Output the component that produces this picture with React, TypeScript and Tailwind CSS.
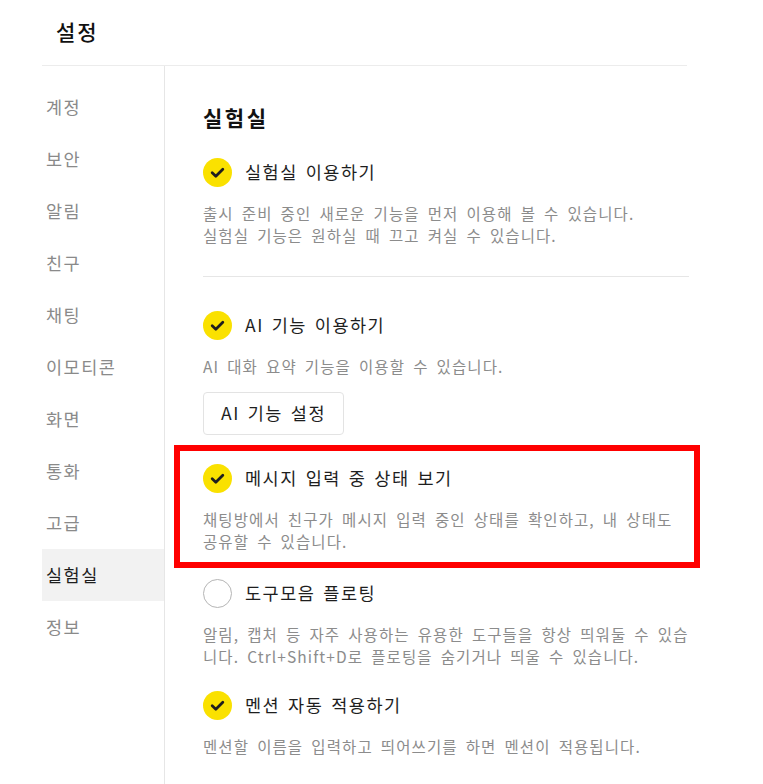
import type { ReactNode } from 'react'

const NAV = ['계정', '보안', '알림', '친구', '채팅', '이모티콘', '화면', '통화', '고급', '실험실', '정보']

function CheckMark({ checked }: { checked: boolean }) {
  if (!checked) {
    return <span className="block h-[29px] w-[29px] shrink-0 rounded-full border-[1.5px] border-[#b5b5b5] bg-white" />
  }
  return (
    <span className="flex h-[29px] w-[29px] shrink-0 items-center justify-center rounded-full bg-[#fae100]">
      <svg width="17" height="17" viewBox="0 0 16 16" fill="none">
        <path d="M3 8.3 6.4 11.5 13 4.9" stroke="#1e1e1e" strokeWidth="2.6" strokeLinecap="round" strokeLinejoin="round" />
      </svg>
    </span>
  )
}

function Option({
  label,
  checked = true,
  lines,
  className = '',
  children,
}: {
  label: string
  checked?: boolean
  lines: string[]
  className?: string
  children?: ReactNode
}) {
  return (
    <div className={className}>
      <div className="flex h-[30px] items-center gap-[13px]">
        <CheckMark checked={checked} />
        <span className="text-[17.5px] tracking-[1.5px] text-[#1e1e1e] [word-spacing:2.5px]">{label}</span>
      </div>
      <p className="mt-[15px] text-[15.5px] leading-[22px] tracking-[1.1px] whitespace-nowrap text-[#8c8c8c] [word-spacing:3.5px]">
        {lines.map((l, i) => (
          <span key={i} className="block">
            {l}
          </span>
        ))}
      </p>
      {children}
    </div>
  )
}

export default function App() {
  return (
    <div className="relative min-h-[784px] bg-white font-['Noto_Sans_CJK_KR','Noto_Sans',sans-serif]">
      <div className="ml-[42px] w-[645px]">
        <header className="flex h-[66px] items-center border-b border-[#ececec] pb-[2px] pl-[14px]">
          <h1 className="text-[21px] font-medium tracking-[2px] text-[#111]">설정</h1>
        </header>

        <div className="flex min-h-[718px]">
          <nav className="w-[123px] shrink-0 border-r border-[#e6e6e6] pt-[15px]">
            {NAV.map((item) => (
              <div
                key={item}
                className={
                  item === '실험실'
                    ? 'flex h-[52px] items-center bg-[#f2f2f2] pl-[4px] text-[17.5px] tracking-[1.5px] text-[#1e1e1e]'
                    : 'flex h-[52px] items-center pl-[4px] text-[17.5px] tracking-[1.5px] text-[#8a8a8a]'
                }
              >
                {item}
              </div>
            ))}
          </nav>

          <main className="flex-1 pl-[38px]">
            <h2 className="mt-[37px] text-[21px] leading-[28px] font-bold tracking-[2.5px] text-[#111]">실험실</h2>

            <Option
              className="mt-[26px]"
              label="실험실 이용하기"
              lines={['출시 준비 중인 새로운 기능을 먼저 이용해 볼 수 있습니다.', '실험실 기능은 원하실 때 끄고 켜실 수 있습니다.']}
            />

            <div className="mt-[30px] border-t border-[#e6e6e6]" />

            <Option className="mt-[33px]" label="AI 기능 이용하기" lines={['AI 대화 요약 기능을 이용할 수 있습니다.']}>
              <button className="mt-[15px] h-[43px] rounded-[4px] border border-[#e3e3e3] px-[17px] text-[17.5px] tracking-[1.5px] text-[#1e1e1e] [word-spacing:2.5px]">
                AI 기능 설정
              </button>
            </Option>

            <Option
              className="mt-[28px]"
              label="메시지 입력 중 상태 보기"
              lines={['채팅방에서 친구가 메시지 입력 중인 상태를 확인하고, 내 상태도', '공유할 수 있습니다.']}
            />

            <Option
              className="mt-[26px]"
              label="도구모음 플로팅"
              checked={false}
              lines={['알림, 캡처 등 자주 사용하는 유용한 도구들을 항상 띄워둘 수 있습', '니다. Ctrl+Shift+D로 플로팅을 숨기거나 띄울 수 있습니다.']}
            />

            <Option className="mt-[23px]" label="멘션 자동 적용하기" lines={['멘션할 이름을 입력하고 띄어쓰기를 하면 멘션이 적용됩니다.']} />
          </main>
        </div>
      </div>

      {/* annotation box */}
      <div className="pointer-events-none absolute top-[445px] left-[174px] h-[123px] w-[526px] border-[6px] border-[#ff0000]" />
    </div>
  )
}
